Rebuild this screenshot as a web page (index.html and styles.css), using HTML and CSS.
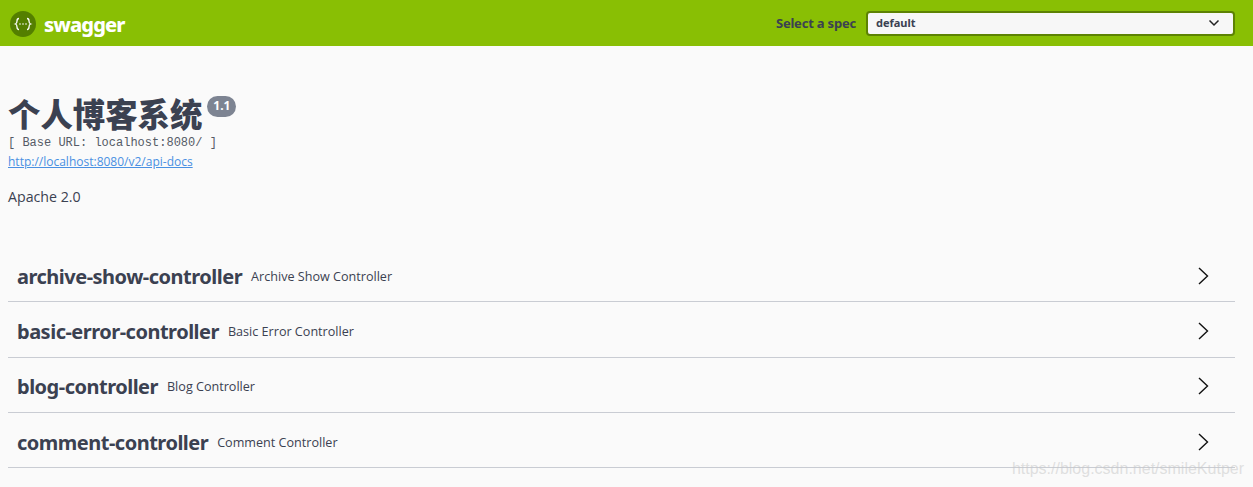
FILE: index.html
```html
<!DOCTYPE html>
<html lang="zh">

<head>
  <meta charset="UTF-8">
  <meta name="viewport" content="width=device-width, initial-scale=1.0">
  <title>Swagger UI</title>
  <link rel="stylesheet" href="styles.css">
</head>

<body>

  <div class="topbar">
    <div class="logo">
      <svg class="logo-icon" width="26" height="26" viewBox="0 0 26 26">
        <circle cx="13" cy="13" r="13" fill="#547f00" />
        <path d="M9 7.500c-2 0-2 1-2 2.500s0 2.500-1.500 3c1.500.5 1.500 1.500 1.500 3s0 2.500 2 2.500M17 7.500c2 0 2 1 2 2.500s0 2.500 1.500 3c-1.500.5-1.500 1.500-1.500 3s0 2.500-2 2.500" fill="none" stroke="#fff" stroke-width="1.300" />
        <circle cx="10" cy="13" r=".8" fill="#fff" />
        <circle cx="13" cy="13" r=".8" fill="#fff" />
        <circle cx="16" cy="13" r=".8" fill="#fff" />
      </svg>
      <span class="logo-text">swagger</span>
    </div>
    <div class="spec">
      <span class="spec-label">Select a spec</span>
      <div class="spec-select">
        <span class="spec-value">default</span>
        <svg width="12" height="8" viewBox="0 0 12 8">
          <path d="M1.500 1.500 6 6l4.500-4.500" fill="none" stroke="#222" stroke-width="1.500" />
        </svg>
      </div>
    </div>
  </div>

  <div class="info">
    <div class="title-line">
      <h1>个人博客系统</h1>
      <span class="version">1.1</span>
    </div>
    <div class="base-url">[ Base URL: localhost:8080/ ]</div>
    <a class="docs-link" href="#">http://localhost:8080/v2/api-docs</a>
    <div class="license">Apache 2.0</div>
  </div>

  <div class="tags">
    <div class="tag">
      <span class="tag-name">archive-show-controller</span>
      <span class="tag-desc">Archive Show Controller</span>
      <svg class="arrow" width="20" height="20" viewBox="0 0 20 20">
        <path d="M6 2l8.500 8-8.500 8" fill="none" stroke="#111" stroke-width="1.400" />
      </svg>
    </div>
    <div class="tag">
      <span class="tag-name">basic-error-controller</span>
      <span class="tag-desc">Basic Error Controller</span>
      <svg class="arrow" width="20" height="20" viewBox="0 0 20 20">
        <path d="M6 2l8.500 8-8.500 8" fill="none" stroke="#111" stroke-width="1.400" />
      </svg>
    </div>
    <div class="tag">
      <span class="tag-name">blog-controller</span>
      <span class="tag-desc">Blog Controller</span>
      <svg class="arrow" width="20" height="20" viewBox="0 0 20 20">
        <path d="M6 2l8.500 8-8.500 8" fill="none" stroke="#111" stroke-width="1.400" />
      </svg>
    </div>
    <div class="tag">
      <span class="tag-name">comment-controller</span>
      <span class="tag-desc">Comment Controller</span>
      <svg class="arrow" width="20" height="20" viewBox="0 0 20 20">
        <path d="M6 2l8.500 8-8.500 8" fill="none" stroke="#111" stroke-width="1.400" />
      </svg>
    </div>
  </div>

  <div class="watermark">https://blog.csdn.net/smileKutper</div>

</body>

</html>
```

FILE: styles.css
```css
html {
  height: 100%;
  overflow: hidden;
}

body {
  margin: 0;
  height: 100%;
  background-color: #fafafa;
  color: #3b4151;
  font-family: "Open Sans", "Noto Sans CJK SC", sans-serif;
  position: relative;
}

.topbar {
  display: flex;
  justify-content: space-between;
  align-items: center;
  height: 46px;
  box-sizing: border-box;
  padding: 0 18px 0 10px;
  background-color: #89bf04;
}

.logo {
  display: flex;
  align-items: center;
  gap: 8px;
  padding-top: 2px;
}

.logo-text {
  color: #fff;
  font-family: "Noto Sans", sans-serif;
  font-size: 20px;
  font-weight: 800;
  letter-spacing: -0.9px;
}

.spec {
  display: flex;
  align-items: center;
  gap: 10px;
}

.spec-label {
  font-family: "Noto Sans", sans-serif;
  font-size: 13px;
  font-weight: 700;
  letter-spacing: -0.2px;
}

.spec-select {
  display: flex;
  justify-content: space-between;
  align-items: center;
  width: 369px;
  height: 25px;
  box-sizing: border-box;
  padding: 0 13px 0 8px;
  border: 2px solid #5d8203;
  border-radius: 4px;
  background-color: #f7f7f7;
  font-family: "Noto Sans", sans-serif;
  font-size: 11px;
  font-weight: 700;
}

.spec-value {
  line-height: 15px;
  margin-bottom: 2px;
}

.info {
  padding: 50px 8px 0;
}

.title-line {
  display: flex;
  align-items: flex-start;
  height: 40px;
}

h1 {
  margin: 0;
  font-family: "Noto Sans CJK SC", sans-serif;
  font-size: 32.400px;
  line-height: 34px;
  font-weight: 900;
}

.version {
  margin-left: 5px;
  padding: 0 6px;
  height: 21px;
  line-height: 20px;
  border-radius: 11px;
  background-color: #7d8492;
  color: #fff;
  font-size: 12px;
  font-weight: 700;
  font-family: "Noto Sans", sans-serif;
}

.base-url {
  height: 17px;
  line-height: 15px;
  color: #555a66;
  font-family: "Liberation Mono", monospace;
  font-size: 12px;
}

.docs-link {
  display: block;
  width: max-content;
  font-size: 12px;
  line-height: 18px;
  color: #4990e2;
}

.license {
  margin-top: 16px;
  font-size: 14.200px;
  line-height: 20px;
}

.tags {
  margin: 40px 18px 0 8px;
}

.tag {
  display: flex;
  align-items: center;
  height: 55.300px;
  box-sizing: border-box;
  padding: 4px 22px 0 9px;
  border-bottom: 1px solid #c9ccd3;
}

.tag-name {
  font-family: "Noto Sans", sans-serif;
  font-size: 20px;
  font-weight: 700;
  letter-spacing: -0.5px;
}

.tag-desc {
  margin-left: 9px;
  font-size: 12.600px;
}

.arrow {
  margin-left: auto;
  margin-top: -1px;
}

.watermark {
  position: absolute;
  right: 9px;
  bottom: 9px;
  color: rgba(200, 200, 200, 0.55);
  font-family: "Liberation Sans", sans-serif;
  font-size: 16px;
}
```
